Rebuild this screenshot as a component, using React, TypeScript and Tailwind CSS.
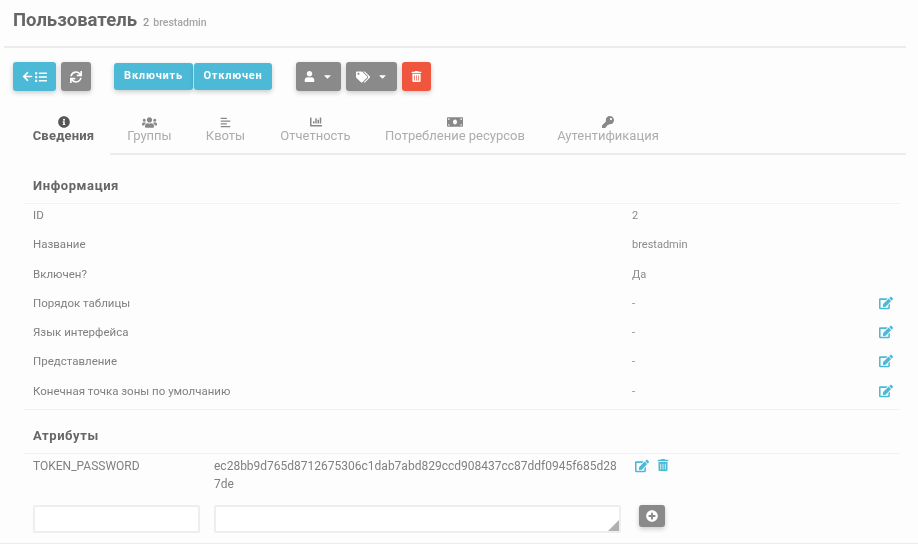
import React from "react";
import { FaArrowLeft, FaList, FaSync, FaUser, FaTags, FaCaretDown, FaInfoCircle, FaUsers, FaAlignLeft, FaChartBar, FaMoneyBill, FaKey, FaEdit, FaTrashAlt, FaPlusCircle } from "react-icons/fa";

const rows: [string, string, boolean][] = [
  ["ID", "2", false],
  ["Название", "brestadmin", false],
  ["Включен?", "Да", false],
  ["Порядок таблицы", "-", true],
  ["Язык интерфейса", "-", true],
  ["Представление", "-", true],
  ["Конечная точка зоны по умолчанию", "-", true],
];

const tabs = [
  { label: "Сведения", Icon: FaInfoCircle, active: true, w: "w-[96px] pl-[3px]", size: 12 },
  { label: "Группы", Icon: FaUsers, active: false, w: "w-[76px] pl-[3px]", size: 15 },
  { label: "Квоты", Icon: FaAlignLeft, active: false, w: "w-[79px]", size: 11 },
  { label: "Отчетность", Icon: FaChartBar, active: false, w: "w-[101px]", size: 12 },
  { label: "Потребление ресурсов", Icon: FaMoneyBill, active: false, w: "w-[178px]", size: 16 },
  { label: "Аутентификация", Icon: FaKey, active: false, w: "w-[128px]", size: 12 },
];

const shadow = "shadow-[0_2px_5px_rgba(0,0,0,0.2)]";

export default function App() {
  return (
    <div className="w-[918px] h-[544px] overflow-hidden bg-[#fdfdfd] font-['Roboto',sans-serif] text-[#777] blur-[0.4px]">
      <div className="mx-[4px] w-[902px] h-[48px] border-b-2 border-[#ececec] flex items-baseline pl-[9px] pt-[10px]">
        <span className="text-[18.5px] leading-[20px] font-bold text-[#666]">Пользователь</span>
        <span className="ml-[6px] text-[11px] font-medium text-[#999]">2</span>
        <span className="ml-[4px] text-[10.5px] font-medium text-[#a5a5a5]">brestadmin</span>
      </div>

      <div className="flex items-center pl-[13px] mt-[14px] h-[29px]">
        <button className={`w-[43px] h-[29px] rounded-[3px] bg-[#4cb9d6] text-white flex items-center justify-center gap-[2px] ${shadow}`}>
          <FaArrowLeft size={11} /><FaList size={12} />
        </button>
        <button className={`ml-[5px] w-[30px] h-[29px] rounded-[3px] bg-[#8a8a8a] text-white flex items-center justify-center ${shadow}`}>
          <FaSync size={12} />
        </button>
        <div className="ml-[23px] flex">
          <button className={`w-[79px] h-[27px] rounded-[3px] bg-[#4cb9d6] text-white text-[11px] font-bold tracking-[0.8px] ${shadow}`}>Включить</button>
          <button className={`ml-[1px] w-[78px] h-[27px] rounded-[3px] bg-[#4cb9d6] text-white text-[11px] font-bold tracking-[0.8px] ${shadow}`}>Отключен</button>
        </div>
        <button className={`ml-[24px] w-[45px] h-[29px] rounded-[3px] bg-[#8a8a8a] text-white flex items-center justify-center gap-[7px] ${shadow}`}>
          <FaUser size={11} /><FaCaretDown size={11} />
        </button>
        <button className={`ml-[5px] w-[51px] h-[29px] rounded-[3px] bg-[#8a8a8a] text-white flex items-center justify-center gap-[7px] ${shadow}`}>
          <FaTags size={14} /><FaCaretDown size={11} />
        </button>
        <button className={`ml-[5px] w-[29px] h-[29px] rounded-[3px] bg-[#f0563d] text-white flex items-center justify-center ${shadow}`}>
          <FaTrashAlt size={11} />
        </button>
      </div>

      <div className="ml-[14px] mt-[24px] w-[892px] h-[40px] flex border-b-2 border-[#ececec]">
        {tabs.map(({ label, Icon, active, w, size }) => (
          <div key={label} className={`${w} shrink-0 flex flex-col items-center ${active ? "bg-[#fdfdfd] h-[42px] text-[#666]" : "text-[#adadad]"}`}>
            <div className={`h-[14px] flex items-center ${active ? "text-[#555]" : "text-[#888]"}`}><Icon size={size} /></div>
            <span className={`text-[13px] leading-[14px] whitespace-nowrap ${active ? "font-bold text-[#666] tracking-[0.2px]" : ""}`}>{label}</span>
          </div>
        ))}
      </div>

      <div className="ml-[33px] mt-[22px] text-[13px] leading-[18px] font-bold tracking-[0.6px] text-[#666]">Информация</div>
      <div className="ml-[24px] mt-[8px] w-[876px] border-t border-b border-[#f2f2f2]">
        {rows.map(([k, v, edit]) => (
          <div key={k} className="h-[29.3px] flex items-start pt-[4px] leading-[14px] text-[11.5px] pl-[9px]">
            <span className="w-[599px] text-[#808080]">{k}</span>
            <span className="w-[247px] mt-[1px] text-[11px] text-[#8a8a8a]">{v}</span>
            {edit && <FaEdit size={14} className="text-[#4cb9d6]" />}
          </div>
        ))}
      </div>

      <div className="ml-[33px] mt-[17px] text-[13px] leading-[18px] font-bold tracking-[0.6px] text-[#666]">Атрибуты</div>
      <div className="ml-[24px] mt-[8px] w-[876px] border-t border-[#f2f2f2] flex pl-[9px] pt-[3px] text-[12px] leading-[18px]">
        <span className="w-[181px] text-[#808080]">TOKEN_PASSWORD</span>
        <span className="w-[421px] pr-[14px] break-all text-[#808080]">ec28bb9d765d8712675306c1dab7abd829ccd908437cc87ddf0945f685d287de</span>
        <span className="flex gap-[8px] pt-[2px] text-[#4cb9d6]"><FaEdit size={14} /><FaTrashAlt size={12} /></span>
      </div>
      <div className="ml-[33px] mt-[12px] flex items-start">
        <input className="w-[167px] h-[28px] rounded-[2px] border-2 border-[#eeeeee] bg-white" />
        <div className="ml-[14px] w-[407px] h-[28px] rounded-[2px] border-2 border-[#eeeeee] bg-white relative">
          <svg width="11" height="11" viewBox="0 0 11 11" className="absolute right-[0px] bottom-[0px]"><polygon points="11,0 11,11 0,11" fill="#b0b0b0" /></svg>
        </div>
        <button className={`ml-[18px] w-[26px] h-[22px] rounded-[3px] bg-[#8a8a8a] text-white flex items-center justify-center ${shadow}`}>
          <FaPlusCircle size={12} />
        </button>
      </div>
      <div className="mt-[10px] h-[2px] bg-[#ececec]"></div>
    </div>
  );
}
